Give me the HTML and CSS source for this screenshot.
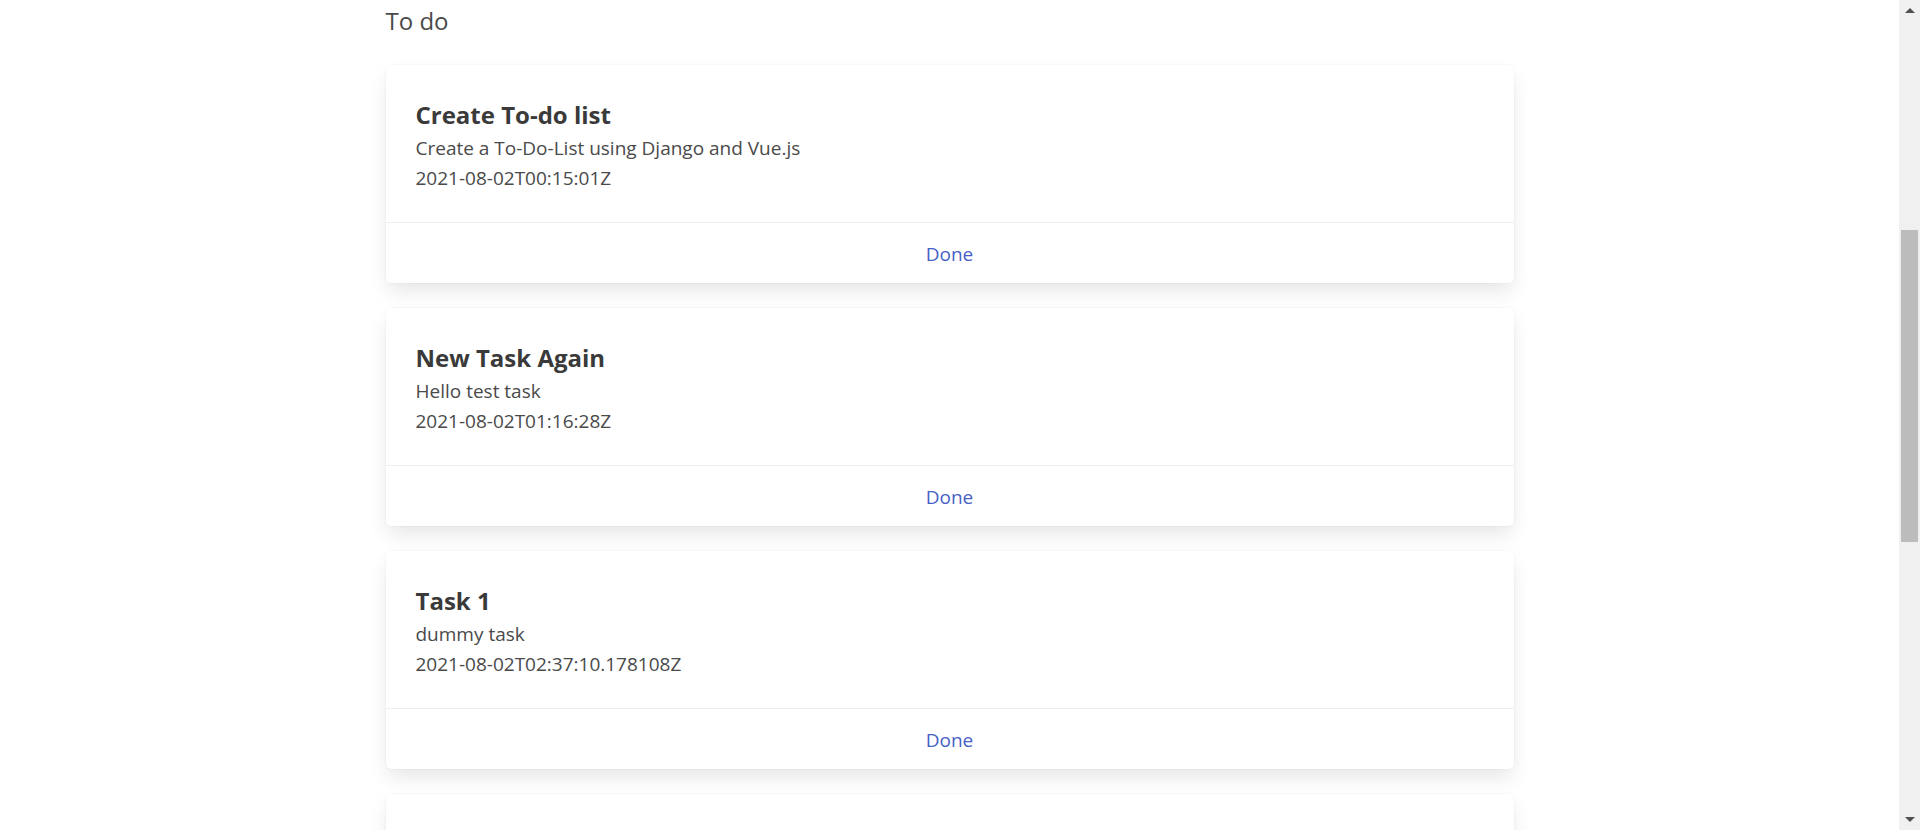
FILE: index.html
```html
<!DOCTYPE html>
<html lang="en">
<head>
<meta charset="utf-8">
<title>To do</title>
<link rel="stylesheet" href="styles.css">
</head>
<body>
<div class="page">
  <main class="main">
    <section class="container">
      <h2 class="section-title">To do</h2>

      <div class="card">
        <div class="card-content">
          <h3 class="task-title">Create To-do list</h3>
          <p class="task-line">Create a To-Do-List using Django and Vue.js</p>
          <p class="task-line">2021-08-02T00:15:01Z</p>
        </div>
        <footer class="card-footer"><a class="card-footer-item" href="#">Done</a></footer>
      </div>

      <div class="card">
        <div class="card-content">
          <h3 class="task-title">New Task Again</h3>
          <p class="task-line">Hello test task</p>
          <p class="task-line">2021-08-02T01:16:28Z</p>
        </div>
        <footer class="card-footer"><a class="card-footer-item" href="#">Done</a></footer>
      </div>

      <div class="card">
        <div class="card-content">
          <h3 class="task-title">Task 1</h3>
          <p class="task-line">dummy task</p>
          <p class="task-line">2021-08-02T02:37:10.178108Z</p>
        </div>
        <footer class="card-footer"><a class="card-footer-item" href="#">Done</a></footer>
      </div>

      <div class="card">
        <div class="card-content card-content-empty"></div>
      </div>
    </section>
  </main>
  <aside class="scrollbar">
    <div class="scroll-btn"><span class="arrow-up"></span></div>
    <div class="scroll-track"><div class="scroll-thumb"></div></div>
    <div class="scroll-btn scroll-btn-down"><span class="arrow-down"></span></div>
  </aside>
</div>
</body>
</html>
```

FILE: styles.css
```css
html, body {
  margin: 0;
  padding: 0;
  height: 100%;
  overflow: hidden;
  background: #ffffff;
}

body {
  font-family: "Open Sans", "Noto Sans", "Liberation Sans", sans-serif;
  color: #4a4a4a;
}

.page {
  display: flex;
  height: 100vh;
}

.main {
  flex: 1;
  overflow: hidden;
}

.container {
  width: 1128px;
  margin: 0 auto;
  display: flex;
  flex-direction: column;
  gap: 25px;
}

.section-title {
  margin: 0;
  padding: 4px 0 2px 0;
  font-size: 24px;
  font-weight: 400;
  line-height: 34px;
  color: #4a4a4a;
}

.card {
  background: #ffffff;
  border-radius: 5px;
  box-shadow: 0 10px 20px -2.5px rgba(10, 10, 10, 0.1), 0 0 0 1px rgba(10, 10, 10, 0.02);
  flex-shrink: 0;
}

.card-content {
  padding: 35px 30px 29px 30px;
}

.card-content-empty {
  height: 120px;
}

.task-title {
  margin: 0 0 3px 0;
  font-size: 24px;
  line-height: 30px;
  font-weight: 700;
  color: #3a3a3a;
}

.task-line {
  margin: 0;
  font-size: 19px;
  line-height: 30px;
  color: #4a4a4a;
}

.card-footer {
  display: flex;
  border-top: 1px solid #ededed;
}

.card-footer-item {
  flex: 1;
  display: flex;
  justify-content: center;
  padding: 17px 15px 14px 15px;
  font-size: 19px;
  line-height: 29px;
  color: #485fc7;
  text-decoration: none;
}

.scrollbar {
  width: 21px;
  flex-shrink: 0;
  background: #f0f0f0;
  display: flex;
  flex-direction: column;
}

.scroll-btn {
  height: 21px;
  display: flex;
  align-items: center;
  justify-content: center;
}

.arrow-up {
  width: 0;
  height: 0;
  border-left: 5px solid transparent;
  border-right: 5px solid transparent;
  border-bottom: 5px solid #505050;
}

.arrow-down {
  width: 0;
  height: 0;
  border-left: 5px solid transparent;
  border-right: 5px solid transparent;
  border-top: 5px solid #505050;
}

.scroll-track {
  flex: 1;
  padding: 0 2px;
}

.scroll-thumb {
  margin-top: 209px;
  height: 312px;
  background: #bcbcbc;
}
```
